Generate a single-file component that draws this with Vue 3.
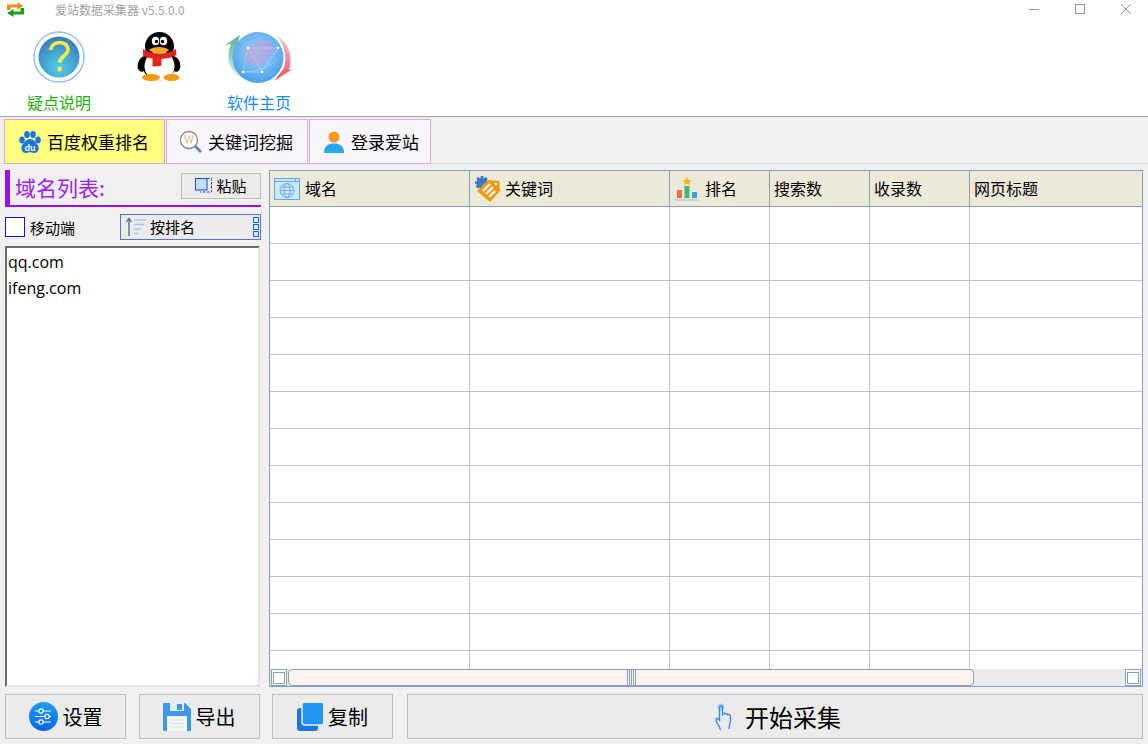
<script setup>
const columns = [
  { name: '域名', icon: 'globe' },
  { name: '关键词', icon: 'tag' },
  { name: '排名', icon: 'chart' },
  { name: '搜索数' },
  { name: '收录数' },
  { name: '网页标题' }
]
const rows = Array.from({ length: 13 }, (_, i) => i)
const domains = ['qq.com', 'ifeng.com']
</script>

<template>
  <div class="app">
    <header class="top">
      <div class="titlebar">
        <svg class="logo" width="17" height="15" viewBox="0 0 17 15">
          <path d="M0 8V2.500h10.500V0L16 4l-5.500 4V5.500H3.500V8z" fill="#e8901a" />
          <path d="M17 6v6.500H6.500V15L0 11l6.500-4v2.500h7V6z" fill="#18a018" />
        </svg>
        <span class="title">爱站数据采集器 v5.5.0.0</span>
        <div class="winctl">
          <svg width="12" height="12" viewBox="0 0 12 12"><path d="M1 6.500h10" stroke="#999" fill="none" /></svg>
          <svg width="12" height="12" viewBox="0 0 12 12"><rect x="1.500" y="1.500" width="9" height="9" stroke="#999" fill="none" /></svg>
          <svg width="12" height="12" viewBox="0 0 12 12"><path d="M1 1l10 10M11 1L1 11" stroke="#999" fill="none" /></svg>
        </div>
      </div>
      <div class="tools">
        <div class="tool">
          <svg width="52" height="52" viewBox="0 0 52 52">
            <defs>
              <radialGradient id="q" cx="50%" cy="75%" r="70%"><stop offset="0" stop-color="#4fd0e6" /><stop offset="1" stop-color="#3a80bc" /></radialGradient>
            </defs>
            <circle cx="26" cy="26" r="25" fill="#fff" stroke="#8fc0e6" stroke-width="1.400" />
            <circle cx="26" cy="26" r="20.500" fill="url(#q)" />
            <path d="M17.500 19c1-5 5-7.500 9-7.500s8.500 2.500 8.500 7c0 6-8 6.500-8.500 13" fill="none" stroke="#ffe84d" stroke-width="3.600" />
            <circle cx="26.500" cy="38" r="2.400" fill="#ffe84d" />
          </svg>
          <span class="lab green">疑点说明</span>
        </div>
        <div class="tool">
          <svg width="52" height="52" viewBox="0 0 52 52">
            <ellipse cx="10" cy="33" rx="5" ry="8" transform="rotate(18 10 33)" fill="#000" />
            <ellipse cx="42" cy="33" rx="5" ry="8" transform="rotate(-18 42 33)" fill="#000" />
            <ellipse cx="26" cy="33" rx="17" ry="16.500" fill="#000" />
            <ellipse cx="26.500" cy="15.500" rx="14.500" ry="14.500" fill="#000" />
            <ellipse cx="26.500" cy="35" rx="15" ry="15" fill="#fff" />
            <ellipse cx="22.500" cy="10" rx="3.700" ry="4.300" fill="#fff" />
            <ellipse cx="30.500" cy="10" rx="3.700" ry="4.300" fill="#fff" />
            <circle cx="23.500" cy="10.500" r="1.700" fill="#000" />
            <circle cx="29.500" cy="10.500" r="1.700" fill="#000" />
            <path d="M16 19c4-4 16-4 20 0-3 4-17 4-20 0z" fill="#f7a81c" />
            <path d="M10 18c9 6 24 6 33 0l.5 6c-6 3-10 3.500-15 4v6l-1 1-8 .5v-8c-4-.5-7-1.500-9.500-3z" fill="#e2231a" />
            <ellipse cx="18" cy="46.500" rx="9" ry="3.500" fill="#f29a12" />
            <ellipse cx="38.500" cy="46.500" rx="8" ry="3.500" fill="#f29a12" />
          </svg>
          <span class="lab">&nbsp;</span>
        </div>
        <div class="tool">
          <svg width="68" height="52" viewBox="0 0 68 52">
            <defs>
              <radialGradient id="g" cx="50%" cy="40%" r="62%"><stop offset="0" stop-color="#a9d4f7" /><stop offset="1" stop-color="#45a0ee" /></radialGradient>
              <linearGradient id="p" x1="0" y1="0" x2="0" y2="1"><stop offset="0" stop-color="#f6c8dc" /><stop offset="1" stop-color="#e8505f" /></linearGradient>
              <linearGradient id="t" x1="0" y1="0" x2="0" y2="1"><stop offset="0" stop-color="#5fae96" /><stop offset="1" stop-color="#d8eef0" /></linearGradient>
            </defs>
            <path d="M0 14L15 4l-2 7C8 22 8 36 18 47 4 40 0 28 6 13z" fill="url(#t)" />
            <path d="M52 5c12 7 16 20 12 34l4-1-19 12 10-13c3-9 1-22-7-32z" fill="url(#p)" />
            <circle cx="33" cy="26.500" r="25.500" fill="url(#g)" />
            <path d="M20 17l9-3 4-5 5 2 4-2 6 5 1 6-6 6-4 7-7 2-9-3-5-7z" fill="#b7a3d8" opacity=".7" />
            <path d="M23 17L37 41M23 17l30 0M23 17L18 41M18 41l19 0M37 41L53 17M18 41c14 0 28-5 34-13" stroke="#d6ecfb" stroke-width=".5" opacity=".7" fill="none" />
            <circle cx="23" cy="17" r="1.300" fill="#fff" />
            <circle cx="53" cy="17" r="1.300" fill="#fff" />
            <circle cx="37" cy="41" r="1.300" fill="#fff" />
            <circle cx="18" cy="41" r="1.300" fill="#fff" />
          </svg>
          <span class="lab blue">软件主页</span>
        </div>
      </div>
    </header>

    <nav class="tabs">
      <div class="tab on">
        <svg width="24" height="24" viewBox="0 0 24 24">
          <ellipse cx="4" cy="10" rx="2.800" ry="3.500" fill="#1a75e8" />
          <ellipse cx="9" cy="4.500" rx="2.800" ry="3.500" fill="#1a75e8" />
          <ellipse cx="15" cy="4.500" rx="2.800" ry="3.500" fill="#1a75e8" />
          <ellipse cx="20" cy="10" rx="2.800" ry="3.500" fill="#1a75e8" />
          <path d="M12 9c4 0 5 3 7 5 3 3 2 9-3 9-2 0-3-.7-4-.7S10 23 8 23c-5 0-6-6-3-9 2-2 3-5 7-5z" fill="#1a75e8" />
          <text x="12" y="21" class="du">du</text>
        </svg>
        <span>百度权重排名</span>
      </div>
      <div class="tab kw">
        <svg width="24" height="24" viewBox="0 0 24 24">
          <circle cx="10" cy="10" r="8.500" fill="#fff" stroke="#888" stroke-width="1.300" />
          <path d="M16 16l6 6" stroke="#5a86a8" stroke-width="2.600" />
          <text x="10" y="13" class="w">W</text>
        </svg>
        <span>关键词挖掘</span>
      </div>
      <div class="tab lg">
        <svg width="24" height="24" viewBox="0 0 24 24">
          <circle cx="12" cy="7" r="5.500" fill="#f89a1c" />
          <path d="M2 23c0-7 4-9.500 10-9.500S22 16 22 23z" fill="#28a8ee" />
        </svg>
        <span>登录爱站</span>
      </div>
    </nav>

    <main class="main">
      <aside class="side">
        <div class="head">
          <span class="htitle">域名列表:</span>
          <button class="paste">
            <svg width="17" height="15" viewBox="0 0 17 15">
              <path d="M12 .5h4.500v13.500H5" fill="none" stroke="#1a46e0" stroke-dasharray="2.500 1.500" />
              <rect x=".5" y=".5" width="11.500" height="11.500" fill="#c5dcf2" stroke="#1a46e0" />
            </svg>
            粘贴
          </button>
        </div>
        <div class="opts">
          <label class="check"><i class="box"></i>移动端</label>
          <div class="sort">
            <svg width="22" height="20" viewBox="0 0 22 20">
              <path d="M4 1l-2.500 4M4 1l2.500 4M4 1v18" stroke="#55709c" stroke-width="1.400" fill="none" />
              <path d="M9 3h12M9 7.500h10M9 12h7M9 16.500h5" stroke="#a7c6f0" stroke-width="1.600" fill="none" />
            </svg>
            <span class="sorttxt">按排名</span>
            <div class="dots"><i></i><i></i><i></i></div>
          </div>
        </div>
        <div class="list">
          <div v-for="d in domains" :key="d" class="item">{{ d }}</div>
        </div>
      </aside>

      <section class="table">
        <div class="thead">
          <div v-for="c in columns" :key="c.name" class="th">
            <svg v-if="c.icon === 'globe'" width="26" height="22" viewBox="0 0 26 22">
              <rect x=".5" y=".5" width="25" height="21" fill="#c5ecfb" stroke="#6c9fe8" />
              <path d="M.5 3.500h25M21.500.5v3" stroke="#6c9fe8" fill="none" />
              <circle cx="13" cy="12.500" r="7" fill="none" stroke="#7aa6e8" />
              <ellipse cx="13" cy="12.500" rx="3" ry="7" fill="none" stroke="#7aa6e8" />
              <path d="M6 12.500h14M7 9h12M7 16h12" stroke="#7aa6e8" fill="none" />
            </svg>
            <svg v-else-if="c.icon === 'tag'" width="26" height="26" viewBox="0 0 26 26">
              <circle cx="8" cy="7" r="5.500" fill="#3c78c8" stroke="#3c78c8" stroke-dasharray="2.500 1.500" stroke-width="3" />
              <path d="M3 15L14 4l11 1 1 10-10 11z" fill="#ee9a0c" />
              <path d="M9 15l7-7M12 18l7-7M15 21l6-6" stroke="#fff" stroke-width="2.300" fill="none" />
              <circle cx="22" cy="8" r="1.300" fill="#fff" />
            </svg>
            <svg v-else-if="c.icon === 'chart'" width="26" height="26" viewBox="0 0 26 26">
              <path d="M13 1l1.500 2.800 3 .4-2.200 2 .6 3L13 7.800 10.100 9.200l.6-3-2.200-2 3-.4z" fill="#f5b81c" />
              <rect x="3" y="14" width="5" height="8" fill="#f26b4a" />
              <rect x="10.500" y="10" width="5" height="12" fill="#3cb878" />
              <rect x="18" y="16" width="5" height="6" fill="#3c9be8" />
              <rect x="1" y="23" width="24" height="2" fill="#c9cfd8" />
            </svg>
            <span class="thtxt">{{ c.name }}</span>
          </div>
        </div>
        <div class="tbody">
          <div v-for="r in rows" :key="r" class="tr">
            <div v-for="c in columns" :key="c.name" class="td"></div>
          </div>
        </div>
        <div class="hscroll">
          <div class="sbtn"><i></i></div>
          <div class="thumb"><div class="grip"></div></div>
          <div class="sbtn end"><i></i></div>
        </div>
      </section>
    </main>

    <footer class="foot">
      <button class="btn">
        <svg width="29" height="29" viewBox="0 0 29 29">
          <defs><linearGradient id="s" x1="0" y1="0" x2="0" y2="1"><stop offset="0" stop-color="#1ea0f2" /><stop offset="1" stop-color="#0a62ee" /></linearGradient></defs>
          <circle cx="14.500" cy="14.500" r="14.500" fill="url(#s)" />
          <g stroke="#fff" fill="none" stroke-width="1.200">
            <path d="M6 9h16M6 14.500h16M6 20h16" />
            <circle cx="12" cy="9" r="2.200" fill="#1a90f2" />
            <circle cx="18" cy="14.500" r="2.200" fill="#1a80f0" />
            <circle cx="12" cy="20" r="2.200" fill="#0f70ee" />
          </g>
        </svg>
        <span>设置</span>
      </button>
      <button class="btn">
        <svg width="28" height="28" viewBox="0 0 28 28">
          <path d="M1 0h21l6 6v21a1 1 0 0 1-1 1H1a1 1 0 0 1-1-1V1a1 1 0 0 1 1-1z" fill="#3f97ec" />
          <rect x="7" y="0" width="14" height="8" fill="#dfeefb" />
          <rect x="14" y="1" width="5" height="6" fill="#3f97ec" />
          <rect x="4" y="13" width="20" height="15" fill="#f4f6f9" />
          <path d="M7 17h14M7 20.500h14M7 24h14" stroke="#d8dde4" fill="none" />
        </svg>
        <span>导出</span>
      </button>
      <button class="btn">
        <svg width="26" height="28" viewBox="0 0 26 28">
          <rect x="0" y="5" width="21" height="23" rx="3" fill="#1b78d6" />
          <rect x="5" y="-1" width="22" height="23" rx="3" fill="#2196f3" stroke="#ececec" stroke-width="1.500" />
        </svg>
        <span>复制</span>
      </button>
      <button class="btn go">
        <svg width="22" height="28" viewBox="0 0 22 28">
          <circle cx="7" cy="4" r="3.500" fill="#a9cdf5" />
          <path d="M5.500 18V4.500a1.500 1.500 0 0 1 3 0V13l.2-2.500c1-.8 2.400-.4 2.600.6.800-.7 2.300-.4 2.500.7.800-.6 2.500-.3 2.700 1.200.2 2 .2 5-.5 7-.5 1.500-1 3-1 6M5.500 17L3 15c-1.500 1.500-1 3 0 5s3 4 3.500 7" fill="none" stroke="#2b8ce6" stroke-width="1.300" />
        </svg>
        <span>开始采集</span>
      </button>
    </footer>
  </div>
</template>

<style>
html, body { margin: 0; background: #f0f0f0; }
</style>

<style scoped>
.app {
  width: 1148px; height: 744px; overflow: hidden;
  display: flex; flex-direction: column;
  background: #f0f0f0; color: #000;
  font-family: "Noto Sans CJK SC", "Liberation Sans", sans-serif;
}
.top { height: 116px; background: #fff; border-bottom: 1px solid #a0a0a0; flex: none; }
.titlebar { height: 20px; display: flex; align-items: center; position: relative; padding-left: 7px; }
.logo { margin-top: -2px; }
.title { margin-left: 31px; font-size: 12px; color: #a0a0a0; line-height: 20px; }
.winctl { margin-left: auto; display: flex; gap: 34px; padding-right: 16px; margin-top: -2px; }
.tools { display: flex; padding-left: 9px; padding-top: 11px; }
.tool { width: 100px; display: flex; flex-direction: column; align-items: center; }
.tool svg { height: 52px; display: block; }
.lab { font-size: 16px; line-height: 20px; margin-top: 9px; }
.green { color: #1cb00c; }
.blue { color: #1c8cf0; }

.tabs { flex: none; height: 47px; display: flex; gap: 1px; padding-left: 4px; padding-top: 2px; box-sizing: border-box; border-bottom: 1px solid #dcdcdc; }
.tab {
  display: flex; align-items: center; gap: 5px;
  border: 1px solid #dca8e8; background: #f8f5fd;
  font-size: 17px; box-sizing: border-box; height: 45px;
}
.tab.on { width: 161px; background: #ffff80; border-color: #f0a0d0; padding-left: 13px; }
.tab.kw { width: 142px; padding-left: 12px; }
.tab.lg { width: 122px; padding-left: 12px; }
.du { font: bold 9px "Liberation Sans", sans-serif; fill: #fff; text-anchor: middle; }
.w { font: 10px "Liberation Sans", sans-serif; fill: #f0b070; text-anchor: middle; }

.main { flex: 1; min-height: 0; display: flex; padding: 6px 5px 0 5px; gap: 8px; }
.side { width: 256px; display: flex; flex-direction: column; flex: none; }
.head {
  height: 37px; box-sizing: border-box; flex: none;
  border-left: 5px solid #9b10f0; border-bottom: 2px solid #9b10f0;
  display: flex; align-items: center; justify-content: space-between;
}
.htitle { color: #a020f0; font-size: 21px; margin-left: 5px; margin-top: -1px; }
.paste {
  width: 80px; height: 26px; box-sizing: border-box;
  background: #ebebeb; border: 1px solid #bdbdbd; padding: 0;
  display: flex; align-items: center; justify-content: center; gap: 4px;
  font: 15px "Noto Sans CJK SC", sans-serif; margin-top: -4px; color: #000;
}
.opts { height: 39px; display: flex; align-items: center; justify-content: space-between; flex: none; padding-top: 1px; box-sizing: border-box; }
.check { display: flex; align-items: center; gap: 5px; font-size: 15px; }
.box { width: 20px; height: 20px; box-sizing: border-box; background: #fff; border: 1px solid #1010f0; display: block; }
.sort {
  width: 141px; height: 26px; box-sizing: border-box;
  border: 1px solid #5b70e0; background: #ececec;
  display: flex; align-items: center; font-size: 15px; padding-left: 4px;
}
.sorttxt { margin-left: 3px; margin-top: -2px; }
.dots { margin-left: auto; margin-right: 1px; display: flex; flex-direction: column; gap: 1px; }
.dots i { display: block; width: 6px; height: 6px; box-sizing: border-box; border: 1px solid #1a6ae8; background: #dbe8fb; }
.list {
  flex: 1; min-height: 0; width: 255px; box-sizing: border-box;
  background: #fff; border: 2px solid #e3e3e3; border-top-color: #6a6a6a; border-left-color: #6a6a6a;
  padding: 1px 1px; font: 16px "Open Sans", "Noto Sans", sans-serif;
}
.item { height: 26px; line-height: 26px; }

.table { flex: 1; min-width: 0; position: relative; border: 1px solid #86a0bc; background: #fff; overflow: hidden; display: flex; flex-direction: column; }
.thead { height: 36px; flex: none; display: grid; grid-template-columns: 200px 200px 100px 100px 100px 1fr; background: #ece9d8; border-bottom: 1px solid #86a0bc; box-sizing: border-box; }
.th { display: flex; align-items: center; border-right: 1px solid #86a0bc; font-size: 16px; padding-left: 4px; gap: 5px; }
.thtxt { margin-top: -2px; }
.th:last-child { border-right: 0; }
.tbody { flex: 1; overflow: hidden; }
.tr { height: 37px; box-sizing: border-box; display: grid; grid-template-columns: 200px 200px 100px 100px 100px 1fr; border-bottom: 1px solid #c0c0c0; }
.td { border-right: 1px solid #c0c0c0; }
.td:last-child { border-right: 0; }
.hscroll {
  position: absolute; left: 0; right: 0; bottom: 0; height: 17px;
  background: #ebebeb; display: flex; align-items: center;
}
.sbtn { width: 16px; height: 17px; box-sizing: border-box; border: 1px solid #86a0bc; background: #fff; display: flex; align-items: center; justify-content: center; margin-left: 1px; flex: none; }
.sbtn i { display: block; width: 10px; height: 10px; border: 1px solid #86a0bc; }
.sbtn.end { margin-left: auto; margin-right: 1px; }
.thumb {
  width: 686px; height: 17px; margin-left: 1px; box-sizing: border-box;
  background: #fff3ee; border: 1px solid #86a0bc; border-radius: 4px;
  display: flex; justify-content: center; flex: none;
}
.grip { width: 9px; height: 100%; background: repeating-linear-gradient(90deg, #86a0bc 0 1px, #fff3ee 1px 2px); }

.foot { flex: none; height: 57px; display: flex; padding: 7px 5px 5px; box-sizing: border-box; gap: 12.500px; }
.btn {
  width: 121px; height: 45px; box-sizing: border-box; padding: 0;
  background: #ebebeb; border: 1px solid #bdbdbd; color: #000;
  display: flex; align-items: center; justify-content: center; gap: 5px;
  font: 20px "Noto Sans CJK SC", sans-serif;
}
.btn.go { flex: 1; font-size: 24px; gap: 9px; margin-left: 1.500px; padding-left: 5px; }
</style>
